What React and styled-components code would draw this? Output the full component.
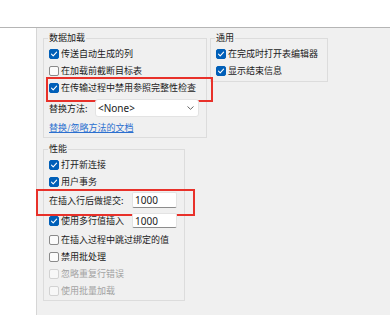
import React from "react";
import styled, { createGlobalStyle, css } from "styled-components";

const Global = createGlobalStyle`
  html, body { margin: 0; padding: 0; background: #ffffff; }
  body { font-family: "Noto Sans CJK SC", "Noto Sans", sans-serif; color: #1b1b1b; }
  * { box-sizing: border-box; }
`;

const Page = styled.div`
  width: 390px;
  height: 315px;
  display: flex;
  flex-direction: column;
  overflow: hidden;
`;

const TopBar = styled.div`
  height: 28px;
  flex: none;
  background: #ffffff;
  border-bottom: 1px solid #b5b5b5;
`;

const Body = styled.div`
  flex: 1;
  display: flex;
`;

const Sidebar = styled.div`
  width: 37px;
  flex: none;
  background: #ffffff;
  border-right: 1px solid #d6d6d6;
`;

const Panel = styled.div`
  flex: 1;
  background: #f0f0f0;
  padding: 3px 0 0 6px;
  display: flex;
  flex-direction: column;
  align-items: flex-start;
`;

const TopGroups = styled.div`
  display: flex;
  gap: 3px;
  align-items: flex-start;
`;

const Group = styled.fieldset`
  margin: 0;
  margin-top: ${(p) => p.$mt || 0}px;
  width: ${(p) => p.$w}px;
  padding: 0 5px ${(p) => p.$pb || 0}px 5px;
  border: 1px solid #dcdcdc;
  min-width: 0;
  display: flex;
  flex-direction: column;
`;

const Legend = styled.legend`
  padding: 0 1px;
  margin-left: -1px;
  font-size: 9px;
  line-height: 14px;
  color: #1b1b1b;
`;

const Row = styled.div`
  position: relative;
  height: ${(p) => p.$h || 17}px;
  display: flex;
  align-items: center;
  font-size: 9px;
  white-space: nowrap;
  color: ${(p) => (p.$disabled ? "#a3a3a3" : "#1b1b1b")};
  ${(p) =>
    p.$hl &&
    css`
      &::after {
        content: "";
        position: absolute;
        left: ${p.$hl.left}px;
        top: ${p.$hl.top}px;
        width: ${p.$hl.width}px;
        height: ${p.$hl.height}px;
        border: 2px solid #e8312a;
        pointer-events: none;
      }
    `}
`;

const Box = styled.span`
  width: 10px;
  height: 10px;
  flex: none;
  border-radius: 2px;
  margin-right: 2px;
  display: inline-flex;
  align-items: center;
  justify-content: center;
  ${(p) =>
    p.$state === "on"
      ? css`
          background: #005fb8;
          border: 1px solid #005fb8;
        `
      : p.$state === "disabled"
      ? css`
          background: #f7f7f7;
          border: 1px solid #d2d2d2;
        `
      : css`
          background: #fbfbfb;
          border: 1px solid #8a8a8a;
        `}
`;

const FieldLabel = styled.span`
  width: ${(p) => p.$w}px;
  flex: none;
  display: flex;
  align-items: center;
`;

const TextInput = styled.div`
  width: 45px;
  height: ${(p) => p.$h}px;
  background: #ffffff;
  border: 1px solid #e3e3e3;
  border-bottom-color: #8c8c8c;
  border-radius: 2px;
  font-family: "Noto Sans", sans-serif;
  font-size: 10px;
  line-height: 1;
  display: flex;
  align-items: center;
  padding-left: 2px;
  color: #1b1b1b;
`;

const Select = styled.div`
  width: 104px;
  height: 18px;
  background: #ffffff;
  border: 1px solid #e3e3e3;
  border-radius: 3px;
  display: flex;
  align-items: center;
  justify-content: space-between;
  padding: 0 4px 0 2px;
  font-family: "Noto Sans", sans-serif;
  font-size: 10px;
  color: #1b1b1b;
`;

const Link = styled.a`
  font-size: 9px;
  color: #2b6fcf;
  text-decoration: underline;
  cursor: pointer;
`;

const Check = () => (
  <svg width="8" height="8" viewBox="0 0 8 8">
    <path d="M1.5 4.2 L3.2 5.8 L6.6 2.2" fill="none" stroke="#fff" strokeWidth="1.1" strokeLinecap="round" strokeLinejoin="round" />
  </svg>
);

const Chevron = () => (
  <svg width="7" height="4" viewBox="0 0 7 4">
    <path d="M0.5 0.5 L3.5 3.3 L6.5 0.5" fill="none" stroke="#555" strokeWidth="0.9" />
  </svg>
);

const CheckItem = ({ label, state = "on", h, hl }) => (
  <Row $h={h} $hl={hl} $disabled={state === "disabled"}>
    <Box $state={state}>{state === "on" && <Check />}</Box>
    {label}
  </Row>
);

export default function App() {
  return (
    <>
      <Global />
      <Page>
        <TopBar />
        <Body>
          <Sidebar />
          <Panel>
            <TopGroups>
              <Group $w={164} $pb={3}>
                <Legend>数据加载</Legend>
                <CheckItem label="传送自动生成的列" />
                <CheckItem label="在加载前截断目标表" state="off" />
                <CheckItem
                  label="在传输过程中禁用参照完整性检查"
                  hl={{ left: -3, top: -2, width: 163, height: 21 }}
                />
                <Row $h={24}>
                  <FieldLabel $w={46}>替换方法:</FieldLabel>
                  <Select>
                    <span>&lt;None&gt;</span>
                    <Chevron />
                  </Select>
                </Row>
                <Row $h={14}>
                  <Link>替换/忽略方法的文档</Link>
                </Row>
              </Group>
              <Group $w={118} $pb={2}>
                <Legend>通用</Legend>
                <CheckItem label="在完成时打开表编辑器" />
                <CheckItem label="显示结束信息" />
              </Group>
            </TopGroups>
            <Group $w={142} $mt={4} $pb={1}>
              <Legend>性能</Legend>
              <CheckItem label="打开新连接" />
              <CheckItem label="用户事务" />
              <Row $h={20} $hl={{ left: -13, top: -1, width: 155, height: 23 }}>
                <FieldLabel $w={83}>在插入行后做提交:</FieldLabel>
                <TextInput $h={16}>1000</TextInput>
              </Row>
              <Row $h={21}>
                <FieldLabel $w={83}>
                  <Box $state="on">
                    <Check />
                  </Box>
                  使用多行值插入
                </FieldLabel>
                <TextInput $h={15}>1000</TextInput>
              </Row>
              <CheckItem label="在插入过程中跳过绑定的值" state="off" />
              <CheckItem label="禁用批处理" state="off" />
              <CheckItem label="忽略重复行错误" state="disabled" />
              <CheckItem label="使用批量加载" state="disabled" />
            </Group>
          </Panel>
        </Body>
      </Page>
    </>
  );
}
